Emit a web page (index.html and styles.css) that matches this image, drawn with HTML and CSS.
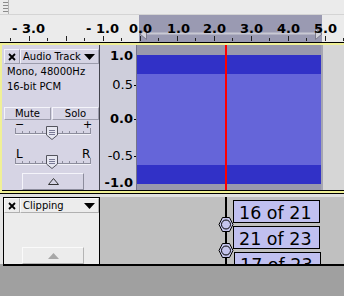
FILE: index.html
```html
<!DOCTYPE html>
<html lang="en">
<head>
    <meta charset="UTF-8">
    <title>Audio Track</title>
    <link rel="stylesheet" href="styles.css">
</head>
<body>
    <div class="toolbar"><div class="grip"></div></div>

    <div class="ruler">
        <div class="ruler-sel"></div>
        <svg class="ruler-ticks" width="344" height="27">
            <rect x="146" y="17.5" width="170" height="2" fill="#c9c9d4"/>
            <polygon points="140,19 146.5,13.5 146.5,24.5" fill="#d2d2da" stroke="#7c7c8c"/>
            <polygon points="322,19 315.5,13.5 315.5,24.5" fill="#d2d2da" stroke="#7c7c8c"/>
            <g stroke="#222" stroke-width="1">
                <line x1="10.5" y1="23" x2="10.5" y2="26"/>
                <line x1="29.5" y1="21" x2="29.5" y2="26"/>
                <line x1="47.5" y1="23" x2="47.5" y2="26"/>
                <line x1="66.5" y1="21" x2="66.5" y2="26"/>
                <line x1="84.5" y1="23" x2="84.5" y2="26"/>
                <line x1="103.5" y1="21" x2="103.5" y2="26"/>
                <line x1="121.5" y1="23" x2="121.5" y2="26"/>
                <line x1="140.5" y1="21" x2="140.5" y2="26"/>
                <line x1="158.5" y1="23" x2="158.5" y2="26"/>
                <line x1="177.5" y1="21" x2="177.5" y2="26"/>
                <line x1="195.5" y1="23" x2="195.5" y2="26"/>
                <line x1="214.5" y1="21" x2="214.5" y2="26"/>
                <line x1="232.5" y1="23" x2="232.5" y2="26"/>
                <line x1="251.5" y1="21" x2="251.5" y2="26"/>
                <line x1="269.5" y1="23" x2="269.5" y2="26"/>
                <line x1="288.5" y1="21" x2="288.5" y2="26"/>
                <line x1="306.5" y1="23" x2="306.5" y2="26"/>
                <line x1="325.5" y1="21" x2="325.5" y2="26"/>
                <line x1="343.5" y1="23" x2="343.5" y2="26"/>
            </g>
        </svg>
        <span class="rl" style="left:12px">- 3.0</span>
        <span class="rl" style="left:86px">- 1.0</span>
        <span class="rl" style="left:129px">0.0</span>
        <span class="rl" style="left:167px">1.0</span>
        <span class="rl" style="left:203px">2.0</span>
        <span class="rl" style="left:240px">3.0</span>
        <span class="rl" style="left:277px">4.0</span>
        <span class="rl" style="left:314px">5.0</span>
    </div>

    <!-- audio track (selected) -->
    <div class="track-audio">
        <div class="track-frame">
            <div class="track-row">
                <div class="tcp">
                    <div class="tcp-head">
                        <div class="close-btn">
                            <svg width="8" height="8"><path d="M1 1L7 7M7 1L1 7" stroke="#000" stroke-width="1.8"/></svg>
                        </div>
                        <div class="title-btn">
                            <span>Audio Track</span>
                            <svg width="11" height="6"><polygon points="0,0 11,0 5.5,6" fill="#000"/></svg>
                        </div>
                    </div>
                    <div class="tcp-info">Mono, 48000Hz<br>16-bit PCM</div>
                    <div class="tcp-buttons">
                        <div class="btn">Mute</div>
                        <div class="btn">Solo</div>
                    </div>
                    <svg class="slider" width="95" height="22">
                        <text x="11" y="7.5" class="sl-text">−</text>
                        <text x="79" y="7.5" class="sl-text">+</text>
                        <line x1="11" y1="14.5" x2="87" y2="14.5" stroke="#f2f2f8"/>
                        <line x1="11" y1="13.5" x2="87" y2="13.5" stroke="#8c8c9c"/>
                        <g stroke="#8c8c9c">
                            <line x1="11.5" y1="8" x2="11.5" y2="13"/>
                            <line x1="18.5" y1="11" x2="18.5" y2="13"/>
                            <line x1="25.5" y1="11" x2="25.5" y2="13"/>
                            <line x1="31.5" y1="11" x2="31.5" y2="13"/>
                            <line x1="38.5" y1="11" x2="38.5" y2="13"/>
                            <line x1="58.5" y1="11" x2="58.5" y2="13"/>
                            <line x1="65.5" y1="11" x2="65.5" y2="13"/>
                            <line x1="72.5" y1="11" x2="72.5" y2="13"/>
                            <line x1="79.5" y1="11" x2="79.5" y2="13"/>
                            <line x1="86.5" y1="8" x2="86.5" y2="13"/>
                        </g>
                        <polygon points="42.5,6.5 53.5,6.5 53.5,15 48,19.5 42.5,15" fill="#e6e6f0" stroke="#54545e"/>
                        <path d="M45 10.5h6M45 12.5h6M45 14.5h6" stroke="#7a7a96"/>
                    </svg>
                    <svg class="slider" width="95" height="28">
                        <text x="12" y="16" class="sl-label">L</text>
                        <text x="78" y="16" class="sl-label">R</text>
                        <line x1="11" y1="22.5" x2="87" y2="22.5" stroke="#f2f2f8"/>
                        <line x1="11" y1="21.5" x2="87" y2="21.5" stroke="#8c8c9c"/>
                        <g stroke="#8c8c9c">
                            <line x1="11.5" y1="16" x2="11.5" y2="21"/>
                            <line x1="18.5" y1="19" x2="18.5" y2="21"/>
                            <line x1="25.5" y1="19" x2="25.5" y2="21"/>
                            <line x1="31.5" y1="19" x2="31.5" y2="21"/>
                            <line x1="38.5" y1="19" x2="38.5" y2="21"/>
                            <line x1="58.5" y1="19" x2="58.5" y2="21"/>
                            <line x1="65.5" y1="19" x2="65.5" y2="21"/>
                            <line x1="72.5" y1="19" x2="72.5" y2="21"/>
                            <line x1="79.5" y1="19" x2="79.5" y2="21"/>
                            <line x1="86.5" y1="16" x2="86.5" y2="21"/>
                        </g>
                        <polygon points="42.5,13.5 53.5,13.5 53.5,22 48,26.5 42.5,22" fill="#e6e6f0" stroke="#54545e"/>
                        <path d="M45 17.5h6M45 19.5h6M45 21.5h6" stroke="#7a7a96"/>
                    </svg>
                    <div class="collapse">
                        <svg width="11" height="7"><polygon points="0.5,6.5 5.5,0.5 10.5,6.5" fill="none" stroke="#333"/></svg>
                    </div>
                </div>

                <div class="vruler">
                    <span class="vl bold" style="top:3px">1.0</span>
                    <span class="vl tick" style="top:32px">0.5</span>
                    <span class="vl bold tick" style="top:66px">0.0</span>
                    <span class="vl tick" style="top:103px">-0.5</span>
                    <span class="vl bold" style="top:130px">-1.0</span>
                </div>

                <div class="wave">
                    <div class="cursor"></div>
                </div>
                <div class="wave-edge"></div>
                <div class="wave-rest"></div>
            </div>
        </div>
    </div>

    <div class="track-gap"></div>

    <!-- label track -->
    <div class="track-labels">
        <div class="gutter"></div>
        <div class="tcp-label">
            <div class="tcp-head">
                <div class="close-btn">
                    <svg width="8" height="8"><path d="M1 1L7 7M7 1L1 7" stroke="#000" stroke-width="1.8"/></svg>
                </div>
                <div class="title-btn">
                    <span>Clipping</span>
                    <svg width="11" height="6"><polygon points="0,0 11,0 5.5,6" fill="#000"/></svg>
                </div>
            </div>
            <div class="collapse collapse-grey">
                <svg width="11" height="6"><polygon points="0,6 5.5,0 11,6" fill="#a8a8a8"/></svg>
            </div>
        </div>
        <div class="label-area">
            <div class="label-line"></div>
            <div class="lbl" style="left:133px;top:3px">16 of 21</div>
            <div class="lbl" style="left:133px;top:29px">21 of 23</div>
            <div class="lbl" style="left:134px;top:55px">17 of 23</div>
            <svg class="handles" width="18" height="46">
                <g fill="#c4c4ec" stroke="#000">
                    <polygon points="2,9.5 5.5,2.5 12.5,2.5 16,9.5 12.5,16.5 5.5,16.5"/>
                    <circle cx="9" cy="9.5" r="4.5"/>
                    <polygon points="2,35.5 5.5,28.5 12.5,28.5 16,35.5 12.5,42.5 5.5,42.5"/>
                    <circle cx="9" cy="35.5" r="4.5"/>
                </g>
            </svg>
        </div>
    </div>
</body>
</html>
```

FILE: styles.css
```css
* {
    margin: 0;
    padding: 0;
    box-sizing: border-box;
}

body {
    width: 344px;
    height: 296px;
    overflow: hidden;
    font-family: "DejaVu Sans", sans-serif;
    background: #a0a0a0;
    color: #000;
}

/* top toolbar strip */
.toolbar {
    height: 15px;
    background: #ebebeb;
    border-bottom: 1px solid #d4d4d4;
}

.grip {
    width: 9px;
    height: 14px;
    border-right: 1px solid #b4b4b4;
    background: repeating-linear-gradient(to bottom, transparent 0, transparent 2px, #8c8c8c 2px, #8c8c8c 3px);
    background-size: 5px 14px;
    background-position: 3px 0;
    background-repeat: no-repeat;
}

/* time ruler */
.ruler {
    position: relative;
    height: 27px;
    background: #ebebeb;
}

.ruler-sel {
    position: absolute;
    left: 139px;
    top: 0;
    width: 183px;
    height: 27px;
    background: #9a9ab2;
}

.ruler-ticks {
    position: absolute;
    left: 0;
    top: 0;
}

.rl {
    position: absolute;
    top: 6px;
    font-size: 13px;
    font-weight: bold;
    line-height: 15px;
    white-space: pre;
}

/* audio track */
.track-audio {
    border-top: 1px solid #000;
    border-bottom: 1px solid #000;
}

.track-frame {
    border: 2px solid #f0f096;
    border-right: none;
}

.track-row {
    display: flex;
    height: 146px;
    border-bottom: 1px solid #000;
}

.tcp {
    width: 98px;
    flex-shrink: 0;
    display: flex;
    flex-direction: column;
    padding: 4px 0 0 2px;
    background: #d6d4e4;
    border-right: 1px solid #44444e;
}

.tcp-head {
    display: flex;
    height: 15px;
}

.close-btn {
    width: 16px;
    display: flex;
    align-items: center;
    justify-content: center;
    border: 1px solid;
    border-color: #f4f4fa #9c9cac #9c9cac #f4f4fa;
}

.title-btn {
    flex: 1;
    display: flex;
    align-items: center;
    justify-content: space-between;
    padding: 0 3px 0 2px;
    font-size: 10px;
    border: 1px solid;
    border-color: #f4f4fa #9c9cac #9c9cac #f4f4fa;
}

.tcp-info {
    padding-left: 3px;
    font-size: 10px;
    line-height: 15px;
}

.tcp-buttons {
    display: flex;
    gap: 1px;
    margin-top: 13px;
    height: 13px;
}

.btn {
    width: 47px;
    font-size: 10px;
    line-height: 11px;
    text-align: center;
    border: 1px solid;
    border-color: #f4f4fa #9c9cac #9c9cac #f4f4fa;
}

.slider {
    display: block;
    flex-shrink: 0;
    overflow: visible;
}

.sl-text {
    font-family: "DejaVu Sans", sans-serif;
    font-size: 11px;
    fill: #000;
}

.sl-label {
    font-family: "DejaVu Sans", sans-serif;
    font-size: 12px;
    fill: #000;
}

.collapse {
    width: 62px;
    height: 17px;
    margin: 3px 0 0 18px;
    display: flex;
    align-items: center;
    justify-content: center;
    border: 1px solid;
    border-color: #f4f4fa #8c8c9c #8c8c9c #f4f4fa;
}

.vruler {
    position: relative;
    width: 37px;
    flex-shrink: 0;
    background: #cecedb;
    border-right: 1px solid #74748a;
}

.vl {
    position: absolute;
    right: 3px;
    font-size: 13px;
    line-height: 15px;
}

.vl.bold {
    font-weight: bold;
}

.vl.tick::after {
    content: "";
    position: absolute;
    right: -3px;
    top: 8px;
    width: 2px;
    height: 1px;
    background: #000;
}

.wave {
    position: relative;
    width: 184px;
    flex-shrink: 0;
    background: linear-gradient(to bottom,
        #9999ad 0, #9999ad 10px,
        #3131c7 10px, #3131c7 29px,
        #6565d9 29px, #6565d9 120px,
        #3131c7 120px, #3131c7 139px,
        #9999ad 139px);
}

.cursor {
    position: absolute;
    left: 88px;
    top: 0;
    bottom: 0;
    width: 2px;
    background: #ff0000;
}

.wave-edge {
    width: 2px;
    flex-shrink: 0;
    background: #a6a6b2;
}

.wave-rest {
    flex: 1;
    background: #d6d6d6;
}

.track-gap {
    height: 3px;
    background: #e0e0e0;
}

/* label track */
.track-labels {
    display: flex;
    height: 69px;
}

.gutter {
    width: 3px;
    height: 67px;
    background: #e4e4e4;
}

.tcp-label {
    width: 97px;
    display: flex;
    flex-direction: column;
    background: #ececec;
    border: 1px solid #000;
    border-bottom-width: 2px;
}

.tcp-label .close-btn,
.tcp-label .title-btn {
    border-color: #fafafa #b0b0b0 #b0b0b0 #fafafa;
}

.collapse-grey {
    margin-top: auto;
    border-color: #fafafa #b4b4b4 #b4b4b4 #fafafa;
}

.label-area {
    position: relative;
    flex: 1;
    overflow: hidden;
    background: #c0c0c0;
    border-bottom: 2px solid #000;
}

.label-line {
    position: absolute;
    left: 125px;
    top: 0;
    bottom: 0;
    width: 2px;
    background: #000;
}

.lbl {
    position: absolute;
    width: 87px;
    height: 23px;
    padding: 1px 0 0 5px;
    font-size: 17.5px;
    line-height: 22px;
    white-space: nowrap;
    background: #c0c0f0;
    border: 1px solid #000;
}

.handles {
    position: absolute;
    left: 117px;
    top: 18px;
}
```
